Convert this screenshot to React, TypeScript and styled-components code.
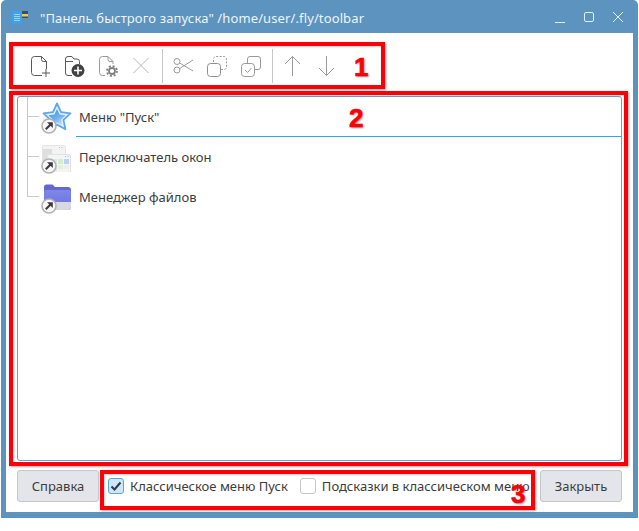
import React from "react";
import styled, { createGlobalStyle } from "styled-components";

const Global = createGlobalStyle`
  html, body { margin: 0; padding: 0; background: #fff; }
  body { font-family: "Noto Sans", sans-serif; width: 639px; height: 531px; overflow: hidden; }
`;
const Stage = styled.div`position: relative; width: 639px; height: 531px; background: #fff;`;
const Win = styled.div`
  width: 637px; height: 518px; margin-left: 1px; box-sizing: border-box;
  background: #5d93bf; border-radius: 5px 5px 0 0;
  padding: 0 5px 6px 5px; display: flex; flex-direction: column;
`;
const TitleBar = styled.header`
  height: 33px; box-sizing: border-box; padding-top: 3px; flex: none; display: flex; align-items: center; color: #eef4f9; font-size: 13px;
`;
const TitleIcon = styled.svg`margin-left: 6px; flex: none;`;
const TitleText = styled.span`margin-left: 12px; flex: 1; letter-spacing: 0.12px; white-space: nowrap;`;
const WinButtons = styled.div`display: flex; gap: 15px; margin-right: 8px; align-items: center;`;
const Body = styled.main`
  flex: 1; min-height: 0; background: #fff; display: flex; flex-direction: column; padding: 8px 11px 9px 11px;
`;
const Toolbar = styled.div`height: 48px; flex: none; display: flex; align-items: center; padding: 2px 0 0 7px; box-sizing: border-box;`;
const Tool = styled.div`width: 34px; height: 30px; display: flex; align-items: center; justify-content: center; flex: none;`;
const Sep = styled.div<{ $left: number }>`width: 1px; height: 34px; background: #c4c6c8; margin: 0 3px 0 ${p => p.$left}px; flex: none;`;
const Tree = styled.div`
  margin-top: 7px; height: 365px; box-sizing: border-box; border: 1px solid #5aa6db; border-radius: 3px;
  display: flex; flex-direction: column; position: relative; overflow: hidden;
`;
const Row = styled.div`height: 40px; display: flex; align-items: center; position: relative; padding-left: 24px; flex: none;`;
const Guide = styled.i<{ $h: number }>`
  position: absolute; left: 9px; bottom: 20px; width: 11px; height: ${p => p.$h}px; border-left: 1px solid #c9c9c9; border-bottom: 1px solid #c9c9c9;
`;
const ItemIcon = styled.div`width: 32px; height: 40px; position: relative; flex: none;`;
const Pict = styled.svg`position: absolute; left: 0; top: 5px;`;
const BadgeSvg = styled.svg`position: absolute; left: -1px; top: 21px;`;
const Label = styled.span`font-size: 13px; color: #3c3c3c; margin-left: 5px; white-space: nowrap; position: relative;`;
const Editor = styled.div`position: absolute; left: 58px; right: 0; bottom: 0; height: 1px; background: #29a9e6;`;
const Footer = styled.footer`margin-top: 9px; height: 32px; flex: none; display: flex; align-items: center;`;
const Button = styled.button`
  width: 82px; height: 32px; box-sizing: border-box; background: #e4e5ea; border: 1px solid #c5c6ca; border-radius: 3px;
  font: 13px "Noto Sans", sans-serif; color: #3c3c3c; padding: 0; flex: none;
`;
const Check = styled.label`display: flex; align-items: center; font-size: 13px; color: #3c3c3c; white-space: nowrap;`;
const Box = styled.span<{ $on?: boolean }>`
  width: 16px; height: 16px; box-sizing: border-box; border-radius: 3px; border: 1px solid ${p => (p.$on ? "#5aa6db" : "#c5c6ca")};
  background: ${p => (p.$on ? "#cfe6f6" : "#fff")}; display: flex; align-items: center; justify-content: center; margin-right: 6px; flex: none;
`;
const Checks = styled.div`flex: 1; display: flex; gap: 12px; padding-left: 9px; overflow: hidden;`;
const Mark = styled.div<{ $x: number; $y: number; $w: number; $h: number }>`
  position: absolute; left: ${p => p.$x}px; top: ${p => p.$y}px; width: ${p => p.$w}px; height: ${p => p.$h}px;
  box-sizing: border-box; border: 4px solid #fb0007; box-shadow: 1px 1px 2px rgba(0,0,0,.35), inset 1px 1px 2px rgba(0,0,0,.2);
`;
const Num = styled.span<{ $x: number; $y: number }>`
  position: absolute; left: ${p => p.$x}px; top: ${p => p.$y}px; color: #fb0007; font: bold 26px/30px "Liberation Sans", sans-serif;
  -webkit-text-stroke: 0.6px #fb0007; text-shadow: 1px 1px 2px rgba(0,0,0,.45);
`;

const S = { fill: "none", stroke: "#5a5a5a", strokeWidth: 1 } as const;
const G = { fill: "none", stroke: "#9a9a9a", strokeWidth: 1 } as const;

const NewFile = () => (
  <svg width="24" height="24" viewBox="0 0 24 24"><path {...S} d="M12.500 2.500H5.500a3 3 0 0 0-3 3v13a3 3 0 0 0 3 3H13M12.500 2.500l5 5V15M12.500 2.500v3a2 2 0 0 0 2 2h3" /><path {...S} d="M17 15v8M13 19h8" /></svg>
);
const NewFolder = () => (
  <svg width="24" height="24" viewBox="0 0 24 24"><path {...S} d="M9 21.500H5a2.500 2.500 0 0 1-2.500-2.500V5A2.500 2.500 0 0 1 5 2.500h4l2 2.500h3a2.500 2.500 0 0 1 2.500 2.500V10M2.500 7.500H10" /><circle cx="15" cy="16.500" r="6.500" fill="#424242" /><path stroke="#fff" strokeWidth="1.600" d="M15 12.500v8M11 16.500h8" /></svg>
);
const FileGear = () => (
  <svg width="24" height="24" viewBox="0 0 24 24"><path {...G} d="M11 2.500H5.500a3 3 0 0 0-3 3v13a3 3 0 0 0 3 3H8M11 2.500l5 5V10M11 2.500v3a2 2 0 0 0 2 2h3" /><circle cx="15" cy="17" r="3" fill="none" stroke="#808080" strokeWidth="1.800" /><circle cx="15" cy="17" r="5" fill="none" stroke="#808080" strokeWidth="1.800" strokeDasharray="2 1.930" /></svg>
);
const Cross = () => (<svg width="24" height="24" viewBox="0 0 24 24"><path stroke="#b8b8b8" d="M2.500 4l15 15M17.500 4l-15 15" /></svg>);
const Scissors = () => (
  <svg width="24" height="24" viewBox="0 0 24 24"><g {...G}><circle cx="6" cy="7.500" r="3" /><circle cx="6" cy="16" r="3" /><path d="M8.700 9L22 17M8.700 14.500L22 6" /></g></svg>
);
const CopyDash = () => (
  <svg width="24" height="24" viewBox="0 0 24 24"><path {...G} strokeDasharray="2 1.500" d="M8.500 8V5A2.500 2.500 0 0 1 11 2.500h8A2.500 2.500 0 0 1 21.500 5v8a2.500 2.500 0 0 1-2.500 2.500h-3" /><rect x="2.500" y="9.500" width="13" height="13" rx="3" fill="#fff" stroke="#8e8e8e" /></svg>
);
const PasteCheck = () => (
  <svg width="24" height="24" viewBox="0 0 24 24"><path {...G} d="M8.500 9V5A2.500 2.500 0 0 1 11 2.500h8A2.500 2.500 0 0 1 21.500 5v8a2.500 2.500 0 0 1-2.500 2.500h-3" /><rect {...G} x="2.500" y="9.500" width="13" height="13" rx="3" /><path {...G} d="M6 16l2.500 2.500 4-4.500" /></svg>
);
const Up = () => (<svg width="24" height="24" viewBox="0 0 24 24"><path {...G} d="M11.500 22V2.500M4 10l7.500-7.500L19 10" /></svg>);
const Down = () => (<svg width="24" height="24" viewBox="0 0 24 24"><path {...G} d="M11.500 2v19.500M4 14l7.500 7.500L19 14" /></svg>);

const Badge = () => (
  <BadgeSvg width="16" height="16" viewBox="0 0 16 16">
    <circle cx="8" cy="8" r="7" fill="#f7f7f7" stroke="#b2b2b2" strokeWidth="1.600" />
    <path d="M4.800 11.300L9.500 6.500" stroke="#3a3a3a" strokeWidth="2" fill="none" /><path d="M6 4.200h5.800V10z" fill="#3a3a3a" />
  </BadgeSvg>
);
const Star = () => (
  <ItemIcon><Pict width="30" height="30" viewBox="0 0 30 30">
    <defs><linearGradient id="st" x1="0.200" y1="0" x2="0.800" y2="1"><stop offset="0" stopColor="#3f97ee" /><stop offset="0.550" stopColor="#6fb2f2" /><stop offset="1" stopColor="#d6e7fa" /></linearGradient></defs>
    <path d="M15 1.500l4 8.700 9.500 1.200-7 6.500 1.900 9.400-8.400-4.700-8.400 4.700 1.900-9.400-7-6.500 9.500-1.200z" fill="#e4f0fc" stroke="#5aa8ef" strokeWidth="1.800" strokeLinejoin="round" />
    <path d="M15 7l2.600 5.500 6 .8-4.400 4.100 1.200 6-5.400-3-5.400 3 1.200-6-4.400-4.100 6-.8z" fill="url(#st)" />
  </Pict><Badge /></ItemIcon>
);
const Switcher = () => (
  <ItemIcon><Pict width="30" height="30" viewBox="0 0 30 30">
    <rect x="0.500" y="3.500" width="23" height="20" rx="1.500" fill="#f3f3f3" stroke="#e4e4e4" />
    <rect x="1" y="7" width="9" height="15" fill="#dedede" />
    <path d="M17 5.500h1M19.500 5.500h1" stroke="#bbb" />
    <rect x="5.500" y="12.500" width="23" height="19" rx="1.500" fill="#f4f4f4" stroke="#e2e2e2" />
    <path d="M23 14.500h1M25.500 14.500h1" stroke="#bbb" />
    <rect x="6" y="17" width="9" height="12" fill="#e4e4e4" />
    <rect x="16" y="17" width="5" height="5" fill="#d5eec9" /><rect x="22" y="17" width="5" height="5" fill="#b7d2f3" />
    <rect x="16" y="23" width="5" height="4" fill="#e0f1d8" /><rect x="22" y="23" width="5" height="4" fill="#ededed" />
  </Pict><Badge /></ItemIcon>
);
const Folder = () => (
  <ItemIcon><Pict width="30" height="30" viewBox="0 0 30 30">
    <defs><linearGradient id="fo" x1="0" y1="0" x2="0" y2="1"><stop offset="0" stopColor="#7f87ea" /><stop offset="1" stopColor="#6a70d8" /></linearGradient></defs>
    <path d="M2 5a2.500 2.500 0 0 1 2.500-2.500h6L13 5h13a3 3 0 0 1 3 3v4H2z" fill="#6468cf" />
    <path d="M2 10a2 2 0 0 1 2-2h23a2 2 0 0 1 2 2v15a3 3 0 0 1-3 3H5a3 3 0 0 1-3-3z" fill="url(#fo)" />
    <path d="M12 20h17v5a3 3 0 0 1-3 3H12z" fill="#d8d9e0" />
  </Pict><Badge /></ItemIcon>
);

export default function App() {
  return (
    <Stage>
      <Global />
      <Win>
        <TitleBar>
          <TitleIcon width="16" height="16" viewBox="0 0 16 16">
            <rect x="0" y="1" width="10" height="13" fill="#3f9ff0" />
            <path d="M2 4.500h6M2 6.500h6M2 8.500h6M2 10.500h6" stroke="#9fd2f8" />
            <rect x="10" y="1" width="6" height="7" fill="#3f4d63" /><rect x="10" y="4" width="6" height="2.500" fill="#f0cc45" />
          </TitleIcon>
          <TitleText>"Панель быстрого запуска" /home/user/.fly/toolbar</TitleText>
          <WinButtons>
            <svg width="14" height="14" viewBox="0 0 14 14"><path d="M2 11.500h10" stroke="#e4edf4" /></svg>
            <svg width="14" height="14" viewBox="0 0 14 14"><rect x="2.500" y="1.500" width="9" height="9" rx="1.500" fill="none" stroke="#e4edf4" /></svg>
            <svg width="14" height="14" viewBox="0 0 14 14"><path d="M2 1l10 10M12 1L2 11" stroke="#e4edf4" /></svg>
          </WinButtons>
        </TitleBar>
        <Body>
          <Toolbar>
            <Tool><NewFile /></Tool><Tool><NewFolder /></Tool><Tool><FileGear /></Tool><Tool><Cross /></Tool>
            <Sep $left={2} />
            <Tool><Scissors /></Tool><Tool><CopyDash /></Tool><Tool><PasteCheck /></Tool>
            <Sep $left={4} />
            <Tool><Up /></Tool><Tool><Down /></Tool>
          </Toolbar>
          <Tree>
            <Row><Guide $h={20} /><Star /><Label>Меню "Пуск"</Label><Editor /></Row>
            <Row><Guide $h={40} /><Switcher /><Label>Переключатель окон</Label></Row>
            <Row><Guide $h={40} /><Folder /><Label>Менеджер файлов</Label></Row>
          </Tree>
          <Footer>
            <Button>Справка</Button>
            <Checks>
              <Check><Box $on><svg width="12" height="12" viewBox="0 0 12 12"><path d="M1.500 6.500l3 3 6-7" fill="none" stroke="#2f3a44" strokeWidth="2" /></svg></Box>Классическое меню Пуск</Check>
              <Check><Box />Подсказки в классическом меню</Check>
            </Checks>
            <Button>Закрыть</Button>
          </Footer>
        </Body>
      </Win>
      <Mark $x={9} $y={42} $w={376} $h={47} />
      <Mark $x={9} $y={91} $w={619} $h={375} />
      <Mark $x={100} $y={470} $w={435} $h={40} />
      <Num $x={354} $y={52}>1</Num>
      <Num $x={349} $y={103}>2</Num>
      <Num $x={511} $y={479}>3</Num>
    </Stage>
  );
}
